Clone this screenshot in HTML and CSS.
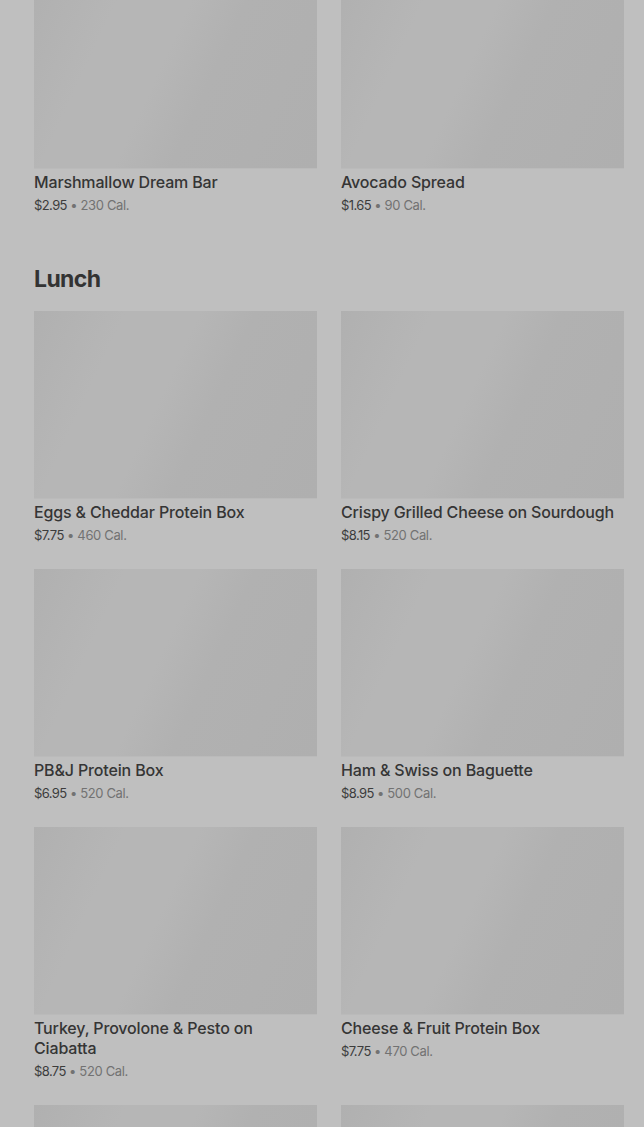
FILE: index.html
```html
<!DOCTYPE html>
<html lang="en">
<head>
    <meta charset="UTF-8">
    <meta name="viewport" content="width=device-width, initial-scale=1.0">
    <title>Menu</title>
    <link rel="stylesheet" href="styles.css">
</head>
<body>
    <main class="menu">
        <!-- previous category, scrolled past the top -->
        <section class="category category-scrolled">
            <div class="item-grid">
                <div class="item">
                    <div class="item-photo"></div>
                    <div class="item-name">Marshmallow Dream Bar</div>
                    <div class="item-meta"><span class="price">$2.95</span> • 230 Cal.</div>
                </div>
                <div class="item">
                    <div class="item-photo"></div>
                    <div class="item-name">Avocado Spread</div>
                    <div class="item-meta"><span class="price">$1.65</span> • 90 Cal.</div>
                </div>
            </div>
        </section>

        <section class="category">
            <h2>Lunch</h2>
            <div class="item-grid">
                <div class="item">
                    <div class="item-photo"></div>
                    <div class="item-name">Eggs &amp; Cheddar Protein Box</div>
                    <div class="item-meta"><span class="price">$7.75</span> • 460 Cal.</div>
                </div>
                <div class="item">
                    <div class="item-photo"></div>
                    <div class="item-name">Crispy Grilled Cheese on Sourdough</div>
                    <div class="item-meta"><span class="price">$8.15</span> • 520 Cal.</div>
                </div>
                <div class="item">
                    <div class="item-photo"></div>
                    <div class="item-name">PB&amp;J Protein Box</div>
                    <div class="item-meta"><span class="price">$6.95</span> • 520 Cal.</div>
                </div>
                <div class="item">
                    <div class="item-photo"></div>
                    <div class="item-name">Ham &amp; Swiss on Baguette</div>
                    <div class="item-meta"><span class="price">$8.95</span> • 500 Cal.</div>
                </div>
                <div class="item">
                    <div class="item-photo"></div>
                    <div class="item-name">Turkey, Provolone &amp; Pesto on Ciabatta</div>
                    <div class="item-meta"><span class="price">$8.75</span> • 520 Cal.</div>
                </div>
                <div class="item">
                    <div class="item-photo"></div>
                    <div class="item-name">Cheese &amp; Fruit Protein Box</div>
                    <div class="item-meta"><span class="price">$7.75</span> • 470 Cal.</div>
                </div>
                <div class="item">
                    <div class="item-photo"></div>
                </div>
                <div class="item">
                    <div class="item-photo"></div>
                </div>
            </div>
        </section>
    </main>
</body>
</html>
```

FILE: styles.css
```css
body {
    font-family: 'Inter', 'Roboto', sans-serif;
    background-color: #bfbfbf;
    margin: 0;
    padding: 0;
    color: #333;
    overflow: hidden;
}

.menu {
    padding: 0 20px 0 34px;
}

.category-scrolled {
    margin-top: -19px;
}

.category h2 {
    font-size: 23px;
    font-weight: 700;
    line-height: 32px;
    margin: 49px 0 16px;
    color: #333;
    letter-spacing: -0.6px;
}

.item-grid {
    display: grid;
    grid-template-columns: 1fr 1fr;
    column-gap: 24px;
    row-gap: 25px;
}

.item-photo {
    height: 187px;
    background-color: #b2b2b2;
    background-image: linear-gradient(115deg, #b0b0b0 0%, #b6b6b6 25%, #b6b6b6 45%, #b1b1b1 60%, #afafaf 100%);
    border-bottom: 1px solid #bababa;
}

.item-name {
    font-size: 16px;
    font-weight: 500;
    line-height: 20px;
    margin-top: 3px;
    color: #353535;
    letter-spacing: -0.15px;
}

.item-meta {
    font-size: 13px;
    line-height: 18px;
    margin-top: 4px;
    color: #727272;
    letter-spacing: -0.35px;
}

.item-meta .price {
    color: #3c3c3c;
    letter-spacing: -0.6px;
}
```
